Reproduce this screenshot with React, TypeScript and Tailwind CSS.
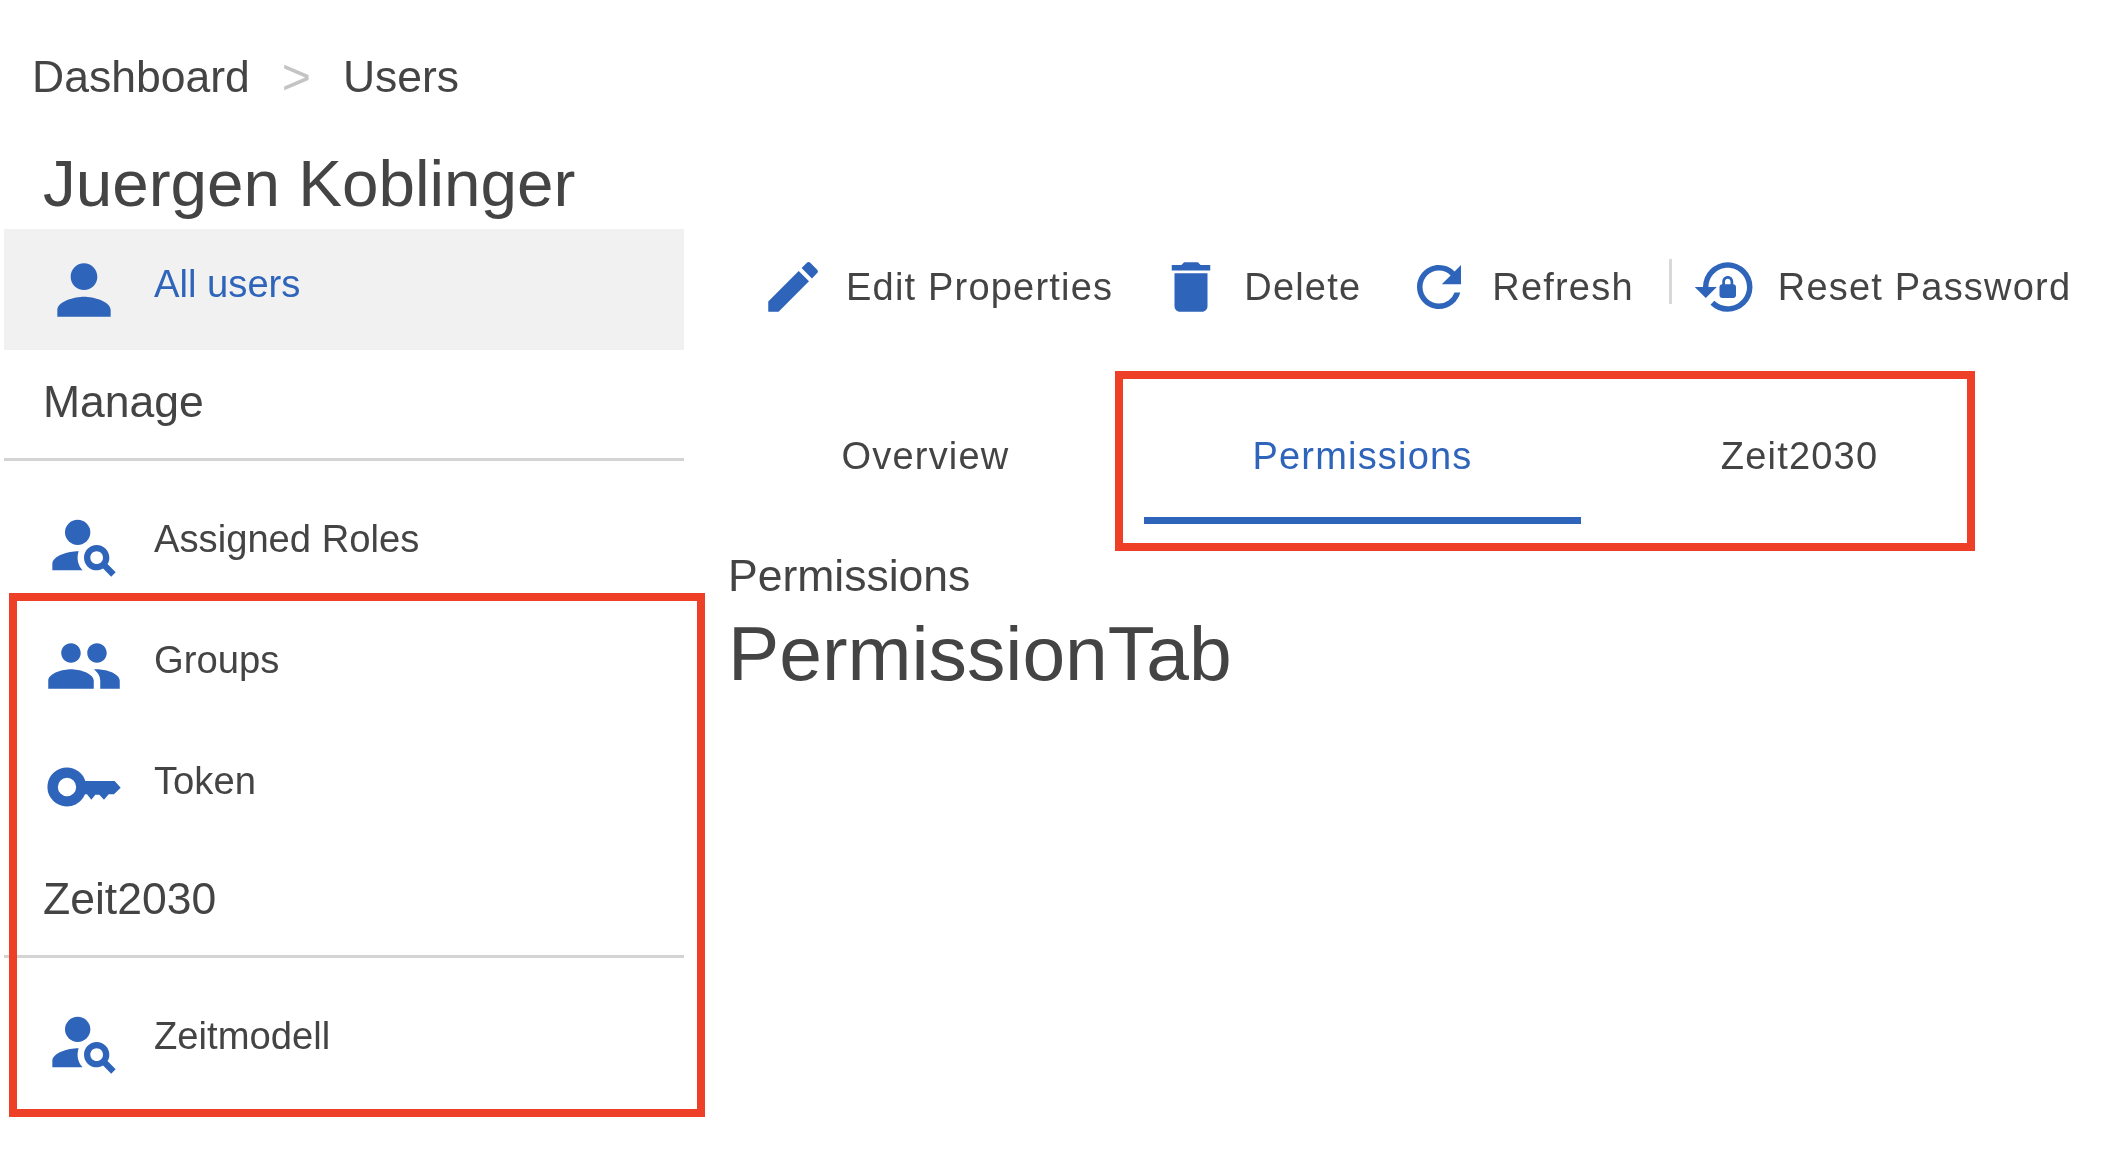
import type { ReactNode } from "react";
import { MdDelete, MdEdit, MdGroup, MdLockReset, MdPerson, MdPersonSearch, MdRefresh } from "react-icons/md";

function KeyIcon({ className }: { className?: string }) {
  return (
    <svg viewBox="0 0 24 24" fill="currentColor" fillRule="evenodd" className={className}>
      <path d="M6.9 6.15A5.85 5.85 0 0 1 12.4 10.2H21.2L23 12.2 21 14.2H19.4L18 15.8 16.6 14.3H15.4L14.2 15.8 12.9 14.2H12.3A5.85 5.85 0 1 1 6.9 6.15ZM6.9 9.25A2.75 2.75 0 1 0 6.9 14.75 2.75 2.75 0 0 0 6.9 9.25Z" />
    </svg>
  );
}

function NavRow({ icon, label, active }: { icon: ReactNode; label: string; active?: boolean }) {
  return (
    <div className={`flex h-[121px] items-center gap-[30px] pl-[40px] ${active ? "bg-[#f1f1f1]" : ""}`}>
      <span className="flex size-[80px] items-center justify-center text-[#2f64bb]">{icon}</span>
      <span className={`-mt-[12px] text-[38.2px] ${active ? "text-[#2f64bb]" : "text-[#444]"}`}>{label}</span>
    </div>
  );
}

function SectionHead({ title }: { title: string }) {
  return (
    <div className="mb-[23px] flex h-[111px] items-center border-b-[3px] border-[#d4d4d4] pb-[3px] pl-[39px] text-[44.5px] text-[#444]">
      {title}
    </div>
  );
}

function ToolButton({ icon, label }: { icon: ReactNode; label: string }) {
  return (
    <div className="flex items-center gap-[20px]">
      <span className="size-[66px] text-[#2f64bb]">{icon}</span>
      <span className="text-[38px] tracking-[1.2px] text-[#444]">{label}</span>
    </div>
  );
}

function Tab({ label, active }: { label: string; active?: boolean }) {
  return (
    <div
      className={`flex h-[129px] w-[437px] items-start justify-center border-b-[7px] pt-[33px] text-[38px] tracking-[1.2px] ${
        active ? "border-[#2f64bb] text-[#2f64bb]" : "border-transparent text-[#444]"
      }`}
    >
      {label}
    </div>
  );
}

export default function App() {
  return (
    <div className="relative h-[1160px] w-[2114px] overflow-hidden bg-white font-['Liberation_Sans',Arial,sans-serif] blur-[0.6px]">
      <div className="flex h-[154px] items-end gap-[32px] pb-[52px] pl-[32px] text-[44.5px] leading-[50px] text-[#444]">
        <span>Dashboard</span>
        <span className="text-[50px] text-[#c4c4c4]">&gt;</span>
        <span>Users</span>
      </div>
      <h1 className="h-[75px] pl-[43px] text-[65.6px] leading-[60px] font-normal text-[#444]">Juergen Koblinger</h1>

      <div className="flex">
        <nav className="ml-[4px] w-[680px] shrink-0">
          <NavRow active label="All users" icon={<MdPerson className="size-[80px]" />} />
          <SectionHead title="Manage" />
          <NavRow label="Assigned Roles" icon={<MdPersonSearch className="size-[76px]" />} />
          <NavRow label="Groups" icon={<MdGroup className="size-[78px]" />} />
          <NavRow label="Token" icon={<KeyIcon className="size-[80px]" />} />
          <SectionHead title="Zeit2030" />
          <NavRow label="Zeitmodell" icon={<MdPersonSearch className="size-[76px]" />} />
        </nav>

        <main className="ml-[44px] min-w-0 flex-1">
          <div className="flex h-[116px] items-center gap-[45px] pl-[32px]">
            <ToolButton label="Edit Properties" icon={<MdEdit className="size-[66px]" />} />
            <ToolButton label="Delete" icon={<MdDelete className="size-[66px]" />} />
            <ToolButton label="Refresh" icon={<MdRefresh className="size-[66px]" />} />
            <div className="-ml-[10px] -mr-[25px] h-[45px] w-[3px] -translate-y-[6px] bg-[#d8d8d8]" />
            <ToolButton label="Reset Password" icon={<MdLockReset className="size-[66px]" />} />
          </div>

          <div className="mt-[50px] -ml-[21px] flex">
            <Tab label="Overview" />
            <Tab active label="Permissions" />
            <Tab label="Zeit2030" />
          </div>

          <div className="mt-[27px] text-[44.5px] leading-[50px] text-[#444]">Permissions</div>
          <div className="mt-[8px] text-[76.8px] leading-[88px] text-[#444]">PermissionTab</div>
        </main>
      </div>

      {/* annotation boxes drawn over the page */}
      <div className="pointer-events-none absolute left-[9px] top-[593px] h-[524px] w-[696px] border-[8px] border-[#ee4026]" />
      <div className="pointer-events-none absolute left-[1115px] top-[371px] h-[180px] w-[860px] border-[8px] border-[#ee4026]" />
    </div>
  );
}
